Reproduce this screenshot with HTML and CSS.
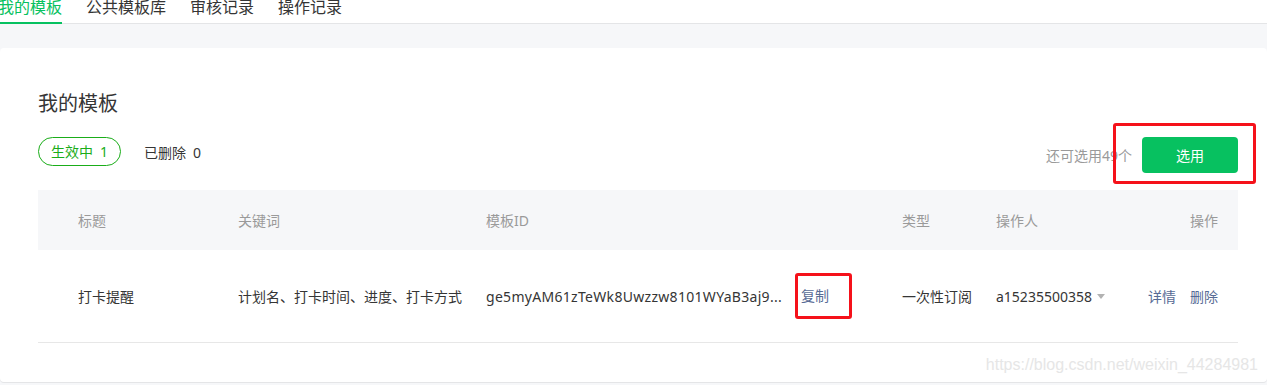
FILE: index.html
```html
<!DOCTYPE html>
<html lang="zh-CN">
    <head>
        <meta charset="UTF-8" />
        <meta name="viewport" content="width=device-width, initial-scale=1.0" />
        <title>我的模板</title>
        <link rel="stylesheet" href="styles.css">
    </head>
    <body>
        <div class="nav">
            <a class="nav-tab active">我的模板</a>
            <a class="nav-tab">公共模板库</a>
            <a class="nav-tab">审核记录</a>
            <a class="nav-tab">操作记录</a>
        </div>

        <div class="panel">
            <h2 class="panel-title">我的模板</h2>

            <div class="toolbar">
                <div class="filters">
                    <span class="pill">生效中<span class="count">1</span></span>
                    <span class="filter">已删除<span class="count">0</span></span>
                </div>
                <div class="actions">
                    <span class="quota">还可选用49个</span>
                    <button class="btn-primary">选用<span class="mark mark-btn"></span></button>
                </div>
            </div>

            <div class="table">
                <div class="table-row table-head">
                    <div>标题</div>
                    <div>关键词</div>
                    <div>模板ID</div>
                    <div>类型</div>
                    <div>操作人</div>
                    <div class="col-ops">操作</div>
                </div>
                <div class="table-row table-body">
                    <div>打卡提醒</div>
                    <div class="keywords">计划名、打卡时间、进度、打卡方式</div>
                    <div class="tpl-id">
                        <span class="id-text">ge5myAM61zTeWk8Uwzzw8101WYaB3aj9...</span>
                        <a class="link copy">复制<span class="mark mark-copy"></span></a>
                    </div>
                    <div>一次性订阅</div>
                    <div class="operator">a15235500358<span class="caret"></span></div>
                    <div class="col-ops">
                        <a class="link">详情</a>
                        <a class="link">删除</a>
                    </div>
                </div>
            </div>

            <div class="watermark">https://blog.csdn.net/weixin_44284981</div>
        </div>
    </body>
</html>
```

FILE: styles.css
```css
* {
    box-sizing: border-box;
}
body {
    margin: 0;
    background: #f6f7f9;
    color: #353535;
    font-family: "Noto Sans", "Noto Sans CJK SC", sans-serif;
    font-size: 14px;
    height: 385px;
    overflow: hidden;
}
.nav {
    display: flex;
    align-items: flex-start;
    gap: 24px;
    height: 24px;
    background: #fff;
    border-bottom: 1px solid #e4e5e7;
}
.nav-tab {
    display: block;
    margin-top: -1px;
    margin-bottom: -1px;
    padding-bottom: 7px;
    font-size: 16px;
    line-height: 16px;
    color: #353535;
    border-bottom: 2px solid transparent;
}
.nav-tab:first-child {
    margin-left: -2px;
}
.nav-tab.active {
    color: #07c160;
    border-bottom-color: #07c160;
}
.panel {
    position: relative;
    margin-top: 24px;
    background: #fff;
    border-radius: 4px;
    padding: 42px 29px 39px 38px;
    box-shadow: 0 1px 0 #e4e5e7;
}
.panel-title {
    margin: 0;
    font-size: 20px;
    line-height: 28px;
    font-weight: normal;
    color: #353535;
}
.toolbar {
    margin-top: 19px;
    display: flex;
    justify-content: space-between;
    align-items: flex-start;
}
.filters {
    display: flex;
    align-items: center;
    gap: 23px;
}
.pill {
    height: 29px;
    line-height: 27px;
    padding: 0 12px;
    border: 1px solid #1aad19;
    border-radius: 15px;
    color: #1aad19;
}
.count {
    margin-left: 7px;
}
.actions {
    display: flex;
    align-items: center;
    gap: 10px;
}
.quota {
    color: #9a9a9a;
}
.btn-primary {
    position: relative;
    width: 96px;
    height: 36px;
    border: none;
    border-radius: 4px;
    background: #07c160;
    color: #fff;
    font-family: inherit;
    font-size: 14px;
}
.mark {
    position: absolute;
    border: 3px solid #f5111a;
    border-radius: 3px;
}
.mark-btn {
    left: -29px;
    right: -18px;
    top: -14px;
    bottom: -11px;
}
.table {
    margin-top: 17px;
}
.table-row {
    display: grid;
    grid-template-columns: 160px 248px 416px 94px 1fr auto;
    align-items: center;
    padding: 0 20px 0 40px;
}
.table-head {
    height: 60px;
    background: #f6f7f9;
    color: #9a9a9a;
}
.table-body {
    height: 93px;
    border-bottom: 1px solid #e7e7e7;
}
.keywords {
    white-space: nowrap;
}
.tpl-id {
    display: flex;
    align-items: center;
}
.id-text {
    letter-spacing: 0.3px;
    white-space: nowrap;
}
.link {
    color: #576b95;
}
.copy {
    position: relative;
    margin-left: 19px;
    line-height: 20px;
}
.mark-copy {
    left: -6px;
    right: -23px;
    top: -13px;
    bottom: -13px;
}
.operator {
    display: flex;
    align-items: center;
}
.caret {
    margin-left: 5px;
    border-left: 4px solid transparent;
    border-right: 4px solid transparent;
    border-top: 5px solid #b2b2b2;
}
.col-ops {
    justify-self: end;
    display: flex;
    gap: 14px;
}
.watermark {
    position: absolute;
    right: 9px;
    bottom: 8px;
    font-family: "Liberation Sans", sans-serif;
    font-size: 16px;
    line-height: 18px;
    color: #e6e6e6;
}
```
